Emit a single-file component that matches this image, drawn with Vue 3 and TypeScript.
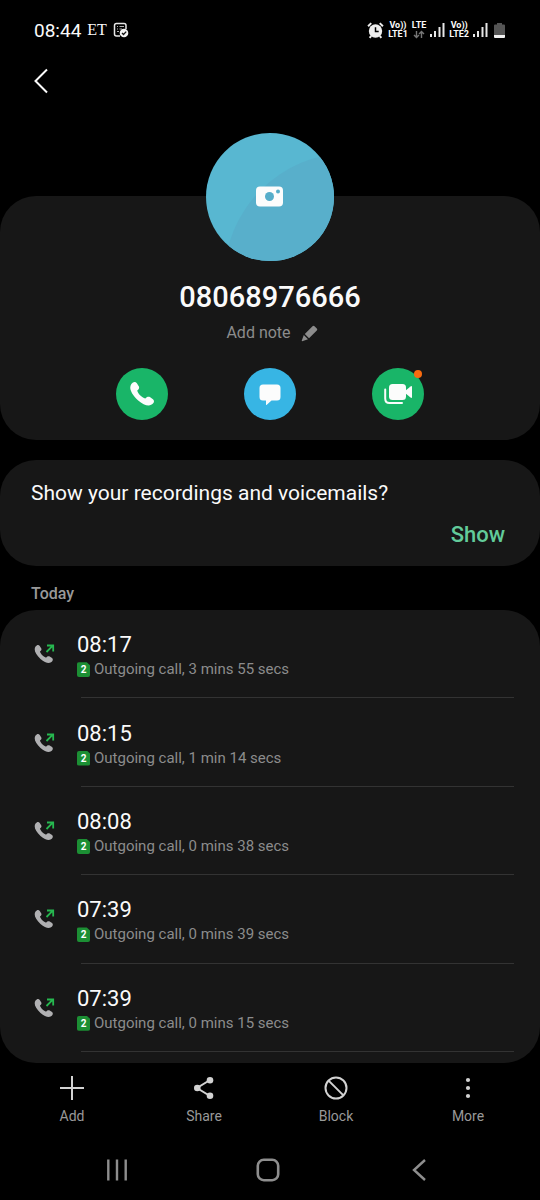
<script setup lang="ts">
interface Call {
  time: string
  detail: string
}

const calls: Call[] = [
  { time: '08:17', detail: 'Outgoing call, 3 mins 55 secs' },
  { time: '08:15', detail: 'Outgoing call, 1 min 14 secs' },
  { time: '08:08', detail: 'Outgoing call, 0 mins 38 secs' },
  { time: '07:39', detail: 'Outgoing call, 0 mins 39 secs' },
  { time: '07:39', detail: 'Outgoing call, 0 mins 15 secs' },
]

const handset =
  'M4 6C9-1 16-2 20 4L26 13C28 18 25 22 21 25C22 30 26 36 32 41C37 45 42 48 45 48C48 44 53 42 58 44L67 50C71 54 71 58 67 63C59 72 42 70 23 53C3 35-4 17 4 6Z'
</script>

<template>
  <div class="screen">
    <div class="status">
      <div class="status-left">
        <span class="clock">08:44</span>
        <span class="et">ET</span>
        <svg width="16" height="16" viewBox="0 0 16 16" fill="none">
          <path d="M13 7V3.5Q13 1.5 11 1.5H3.5Q1.5 1.5 1.5 3.5V12Q1.5 14 3.5 14H7" stroke="#e6e6e6" stroke-width="1.5" />
          <path d="M4 4.500H5M6.500 4.500H11M4 7H5M6.500 7H9M4 9.500H6" stroke="#b4b4b4" stroke-width="1.200" />
          <circle cx="11" cy="11" r="4.300" fill="#f2f2f2" />
          <path d="M9 11L10.500 12.500L13.200 9.600" stroke="#111" stroke-width="1.300" />
        </svg>
      </div>
      <div class="status-right">
        <svg width="17" height="17" viewBox="0 0 16 16" fill="none">
          <circle cx="8" cy="8.500" r="6.300" fill="#ededed" />
          <path d="M1 4L4 1M15 4L12 1M4 13L2.500 15M12 13L13.500 15" stroke="#ededed" stroke-width="1.800" />
          <path d="M8 5V9H11" stroke="#000" stroke-width="1.400" />
        </svg>
        <span class="net"><span>Vo))</span><span>LTE1</span></span>
        <span class="net">
          <span>LTE</span>
          <svg width="12" height="9" viewBox="0 0 12 9" fill="none" stroke="#777" stroke-width="1.400">
            <path d="M3.500 1V7M1 5L3.500 7.500L6 5M8.500 8V2M6 4L8.500 1.500L11 4" />
          </svg>
        </span>
        <svg width="15" height="16" viewBox="0 0 15 16" fill="#e6e6e6">
          <path d="M0 12H2V15H0ZM4 9H6V15H4ZM8.500 5H10.500V15H8.500ZM12.500 1H14.500V15H12.500Z" />
        </svg>
        <span class="net"><span>Vo))</span><span>LTE2</span></span>
        <svg width="15" height="16" viewBox="0 0 15 16" fill="#e6e6e6">
          <path d="M0 12H2V15H0ZM4 9H6V15H4ZM8.500 5H10.500V15H8.500ZM12.500 1H14.500V15H12.500Z" />
        </svg>
        <svg class="battery" width="11" height="17" viewBox="0 0 11 17">
          <path d="M3 1H8V2.500H10Q11 2.500 11 3.500V13H0V3.500Q0 2.500 1 2.500H3Z" fill="#555" />
          <path d="M0 13H11V15Q11 16 10 16H1Q0 16 0 15Z" fill="#f2f2f2" />
        </svg>
      </div>
    </div>

    <header class="header">
      <button class="back" aria-label="Back">
        <svg width="14" height="26" viewBox="0 0 14 26" fill="none" stroke="#fafafa" stroke-width="2">
          <path d="M13 1.500L1.500 13L13 24.500" />
        </svg>
      </button>
    </header>

    <main class="content">
      <section class="profile">
        <button class="avatar" aria-label="Add photo">
          <svg width="128" height="128" viewBox="0 0 128 128">
            <defs>
              <clipPath id="face"><circle cx="64" cy="64" r="64" /></clipPath>
            </defs>
            <g clip-path="url(#face)">
              <rect width="128" height="128" fill="#58b7d1" />
              <circle cx="144" cy="146" r="126" fill="#58afcb" />
            </g>
            <rect x="50" y="53.500" width="27" height="20" rx="4" fill="#fcfcfc" />
            <circle cx="63.500" cy="63.500" r="4.500" fill="#56adca" />
            <circle cx="72" cy="58.500" r="2" fill="#56adca" />
          </svg>
        </button>
        <h1 class="number">08068976666</h1>
        <button class="note">
          <span>Add note</span>
          <svg width="17" height="17" viewBox="0 0 17 17" fill="#8c8c8c">
            <path d="M11.500 1.200Q12.500 0.200 13.500 1.200L15.800 3.500Q16.800 4.500 15.800 5.500L8 13.200L3.800 9ZM2.800 10L7 14.200L1.200 16.200Q0.500 16.200 0.800 15.500Z" />
          </svg>
        </button>
        <div class="actions">
          <button class="action green" aria-label="Call">
            <svg width="24" height="24" viewBox="0 0 70 70" fill="#fcfcfc"><path :d="handset" /></svg>
          </button>
          <button class="action blue" aria-label="Message">
            <svg width="22" height="22" viewBox="0 0 22 22" fill="#fcfcfc">
              <path d="M4 1.500H18Q21.500 1.500 21.500 5V14Q21.500 17.500 18 17.500H12.500L7.500 22Q7 22 7 21.500V17.500H4Q0.500 17.500 0.500 14V5Q0.500 1.500 4 1.500Z" />
            </svg>
          </button>
          <button class="action green" aria-label="Video call">
            <svg width="28" height="22" viewBox="0 0 28 22" fill="#fcfcfc">
              <rect x="5" y="1" width="17" height="16" rx="3.500" />
              <path d="M21 8L26.500 3.500Q28 2.500 28 4V14Q28 15.500 26.500 14.500L21 10Z" />
              <path d="M1.200 6.500V15.500Q1.200 20 5.500 20H18" fill="none" stroke="#fcfcfc" stroke-width="2" stroke-linecap="round" />
            </svg>
            <span class="dot"></span>
          </button>
        </div>
      </section>

      <section class="prompt">
        <p class="question">Show your recordings and voicemails?</p>
        <button class="show">Show</button>
      </section>

      <h2 class="day">Today</h2>
      <ul class="calls">
        <li v-for="(call, i) in calls" :key="i" class="call">
          <svg width="22" height="20" viewBox="0 0 22 20" fill="none">
            <path :d="handset" fill="#b0b0b2" transform="translate(0.500 1) scale(.262)" />
            <path d="M12.500 8L18.800 1.700M13 1.500H19.200V7.500" stroke="#27b850" stroke-width="1.800" />
          </svg>
          <div class="info">
            <span class="time">{{ call.time }}</span>
            <span class="detail"><span class="sim">2</span>{{ call.detail }}</span>
          </div>
        </li>
      </ul>
    </main>

    <nav class="toolbar">
      <button class="tool">
        <svg width="24" height="24" viewBox="0 0 24 24" stroke="#d2d2d2" stroke-width="2"><path d="M12 0V24M0 12H24" /></svg>
        <span>Add</span>
      </button>
      <button class="tool">
        <svg width="24" height="24" viewBox="0 0 24 24" fill="#d2d2d2">
          <path d="M18 4L5 12L18 20" fill="none" stroke="#d2d2d2" stroke-width="2" />
          <circle cx="18" cy="4.300" r="3.300" /><circle cx="5.300" cy="12" r="3.300" /><circle cx="18" cy="19.700" r="3.300" />
        </svg>
        <span>Share</span>
      </button>
      <button class="tool">
        <svg width="24" height="24" viewBox="0 0 24 24" fill="none" stroke="#d2d2d2" stroke-width="2">
          <circle cx="12" cy="12" r="10.500" /><path d="M4.600 4.600L19.400 19.400" />
        </svg>
        <span>Block</span>
      </button>
      <button class="tool">
        <svg width="24" height="24" viewBox="0 0 24 24" fill="#d2d2d2">
          <circle cx="12" cy="4" r="2.100" /><circle cx="12" cy="12" r="2.100" /><circle cx="12" cy="20" r="2.100" />
        </svg>
        <span>More</span>
      </button>
    </nav>

    <nav class="system">
      <button aria-label="Recents">
        <svg width="24" height="24" viewBox="0 0 24 24" stroke="#8e8e8e" stroke-width="2.400"><path d="M3.300 1.500V22.500M12 1.500V22.500M20.700 1.500V22.500" /></svg>
      </button>
      <button aria-label="Home">
        <svg width="24" height="24" viewBox="0 0 24 24" fill="none" stroke="#8e8e8e" stroke-width="2.600"><rect x="1.800" y="1.800" width="20.400" height="20.400" rx="6" /></svg>
      </button>
      <button aria-label="Go back">
        <svg width="24" height="24" viewBox="0 0 24 24" fill="none" stroke="#8e8e8e" stroke-width="2.400"><path d="M18 2L7 12L18 22" /></svg>
      </button>
    </nav>
  </div>
</template>

<style>
body {
  margin: 0;
  background: #000;
}
</style>

<style scoped>
.screen {
  display: flex;
  flex-direction: column;
  min-height: 100vh;
  background: #000;
  color: #fafafa;
  font-family: Roboto, "Noto Sans", sans-serif;
}
svg {
  display: block;
  flex: none;
}
button {
  border: 0;
  padding: 0;
  background: none;
  color: inherit;
  font: inherit;
  cursor: pointer;
}
h1,
h2,
p,
ul {
  margin: 0;
  padding: 0;
}
.status {
  display: flex;
  justify-content: space-between;
  align-items: center;
  height: 60px;
  padding: 0 35px 0 34px;
}
.status-left {
  display: flex;
  align-items: center;
  gap: 6px;
}
.clock {
  margin-top: 2px;
  font-size: 19px;
  line-height: 24px;
}
.et {
  font-family: "Liberation Serif", serif;
  font-size: 16px;
}
.status-right {
  display: flex;
  align-items: center;
  gap: 4px;
}
.net {
  display: flex;
  flex-direction: column;
  align-items: center;
  height: 18px;
  font-size: 9px;
  line-height: 9px;
  font-weight: 700;
}
.battery {
  margin-left: 2px;
}
.header {
  height: 42px;
  padding: 0 34px;
  display: flex;
  align-items: center;
}
.back {
  display: flex;
}
.content {
  flex: 1;
  display: flex;
  flex-direction: column;
}
.profile {
  display: flex;
  flex-direction: column;
  align-items: center;
  margin-top: 94px;
  padding-bottom: 20px;
  border-radius: 36px;
  background: #171717;
}
.avatar {
  margin-top: -63px;
  border-radius: 50%;
}
.number {
  margin-top: 18px;
  font-size: 29px;
  line-height: 36px;
  font-weight: 500;
}
.note {
  display: flex;
  align-items: center;
  gap: 10px;
  margin-top: 6px;
  margin-left: 4px;
  font-size: 16px;
  line-height: 24px;
  color: #8c8c8c;
}
.actions {
  display: flex;
  gap: 76px;
  margin-top: 23px;
}
.action {
  position: relative;
  display: flex;
  align-items: center;
  justify-content: center;
  width: 52px;
  height: 52px;
  border-radius: 50%;
}
.green {
  background: #19b568;
}
.blue {
  background: #37b5e4;
}
.dot {
  position: absolute;
  top: 2px;
  right: 2px;
  width: 8px;
  height: 8px;
  border-radius: 50%;
  background: #f96b0f;
}
.prompt {
  display: flex;
  flex-direction: column;
  margin-top: 20px;
  padding: 19px 35px 17px 31px;
  border-radius: 36px;
  background: #171717;
}
.question {
  font-size: 21px;
  line-height: 28px;
}
.show {
  align-self: flex-end;
  margin-top: 14px;
  font-size: 22px;
  line-height: 28px;
  font-weight: 500;
  color: #62cb9a;
}
.day {
  padding: 11px 31px 0;
  font-size: 16px;
  line-height: 33px;
  font-weight: 500;
  color: #999;
}
.calls {
  flex: 1;
  display: flex;
  flex-direction: column;
  padding-bottom: 11px;
  border-radius: 36px;
  background: #171717;
  list-style: none;
}
.call {
  flex: 1;
  display: flex;
  align-items: center;
  gap: 21px;
  padding: 0 26px 0 34px;
  background: linear-gradient(#333, #333) right 26px bottom / calc(100% - 107px) 1px no-repeat;
}
.info {
  display: flex;
  flex-direction: column;
  padding: 20px 0 17px;
}
.time {
  font-size: 22px;
  line-height: 28px;
}
.detail {
  display: flex;
  align-items: center;
  gap: 4px;
  font-size: 15px;
  line-height: 21px;
  color: #8c8c8c;
}
.sim {
  width: 13px;
  height: 15px;
  border-radius: 2px;
  clip-path: polygon(0 0, 75% 0, 100% 20%, 100% 100%, 0 100%);
  background: #1c8f34;
  color: #fff;
  font-size: 10px;
  line-height: 15px;
  font-weight: 700;
  text-align: center;
}
.toolbar {
  display: flex;
  height: 77px;
  padding: 0 6px;
}
.tool {
  flex: 1;
  display: flex;
  flex-direction: column;
  align-items: center;
  gap: 6px;
  padding-top: 13px;
  font-size: 14px;
  line-height: 20px;
  color: #999;
}
.system {
  display: flex;
  height: 60px;
  padding: 0 46px 0 41px;
}
.system button {
  flex: 1;
  display: flex;
  align-items: center;
  justify-content: center;
}
</style>
